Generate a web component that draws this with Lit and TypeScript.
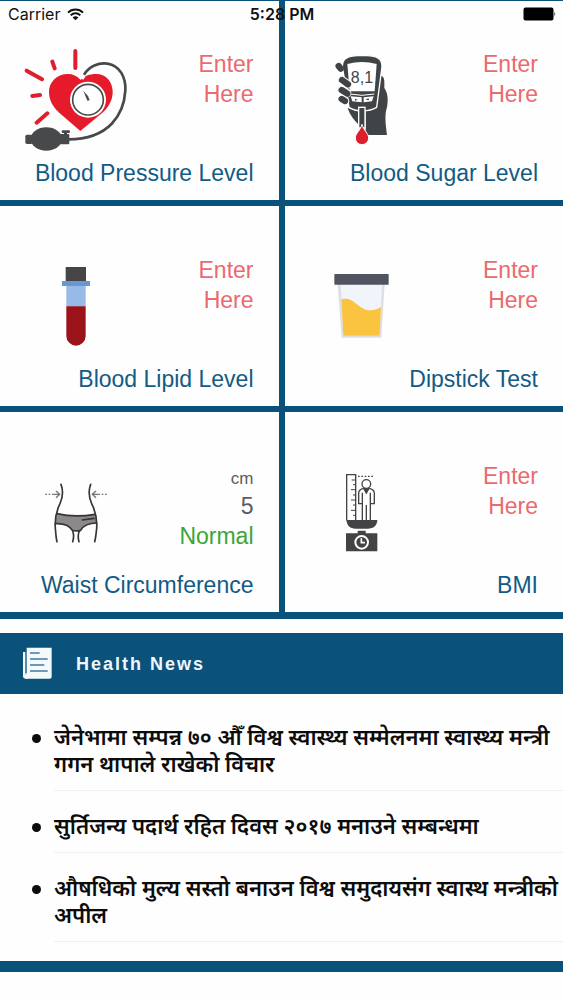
import { LitElement, html, svg, css } from "lit";
import { customElement, property } from "lit/decorators.js";

const icons = {
  pressure: svg`<svg viewBox="72 144 312 312" aria-hidden="true">
    <g stroke="#e01f2e" stroke-width="12" stroke-linecap="round">
      <path d="M226 153V204M157 185L164 205M80 212L126 238M97 288L120 285M110 368L142 340" />
    </g>
    <path fill="#e51a2b" d="M242 240C230 226 216 221 200 222C168 224 147 248 147 276C147 300 158 319 176 337L241 393L309 337C328 317 339 298 338 272C336 244 318 222 288 222C268 222 252 228 242 240Z" />
    <path fill="none" stroke="#fff" stroke-width="14" d="M244 236C262 202 292 187 322 191" />
    <path fill="none" stroke="#48494b" stroke-width="8" d="M252 224C268 199 296 187 322 191C360 197 378 232 376 272C372 340 330 418 205 418" />
    <circle cx="264" cy="299" r="54" fill="#fff" />
    <circle cx="264" cy="299" r="46" fill="#fff" stroke="#48494b" stroke-width="5" />
    <path fill="#48494b" d="M250 272L264 288L269 301L262 302Z" />
    <g fill="#48494b">
      <ellipse cx="139" cy="417" rx="47" ry="35" />
      <rect x="76" y="404" width="22" height="28" rx="5" />
      <rect x="176" y="402" width="32" height="31" rx="3" />
      <rect x="185" y="391" width="25" height="8" rx="3" />
      <rect x="192" y="396" width="9" height="12" />
    </g>
  </svg>`,
  sugar: svg`<svg viewBox="82 144 312 312" aria-hidden="true">
    <path fill="#414446" d="M284 245C284 222 308 222 308 244V264C319 280 320 300 316 322C308 346 312 374 316 405H252V326H266L284 318ZM198 324L231 330V374C216 360 204 344 198 324Z" />
    <path fill="#414446" stroke="#fff" stroke-width="4" d="M182 200C182 176 194 167 242 166C290 167 301 176 301 200L285 322C262 336 222 336 202 322Z" />
    <path fill="#fff" d="M197 192Q241 180 285 192L279 274H204Z" />
    <text x="241" y="248" text-anchor="middle" font-family="Liberation Sans" font-size="48" fill="#414446">8,1</text>
    <path fill="none" stroke="#fff" stroke-width="3" d="M204 282Q241 290 278 282" />
    <path fill="#fff" d="M207 289L240 292V307L212 304ZM246 292L276 289L271 304L246 307Z" />
    <path fill="#414446" d="M220 296l8 3-8 3zM254 296h8v4h-8z" />
    <g fill="none" stroke-linecap="round">
      <path stroke="#fff" stroke-width="26" d="M181 241L198 253M181 271L196 280M180 297L190 303" />
      <path stroke="#414446" stroke-width="19" d="M171 198L177 206M181 240L199 253M180 270L197 281M180 297L190 303" />
    </g>
    <rect x="231" y="322" width="19" height="62" fill="#414446" stroke="#fff" stroke-width="4" />
    <path fill="#dd1f2d" stroke="#fff" stroke-width="3" d="M241 373C236 392 221 400 221 414A20 20 0 0 0 261 414C261 400 246 392 241 373Z" />
  </svg>`,
  lipid: svg`<svg viewBox="72 162 312 312" aria-hidden="true">
    <rect x="197" y="201" width="61" height="42" fill="#454547" />
    <rect x="199" y="256" width="58" height="64" fill="#97bbe6" />
    <rect x="186" y="243" width="84" height="15" fill="#6898cf" />
    <path fill="#9a1319" d="M199 319H257V408A29 29 0 0 1 199 408Z" />
  </svg>`,
  dipstick: svg`<svg viewBox="82 162 312 312" aria-hidden="true">
    <path fill="#dcdfe4" d="M168 252H309L299 413H180Z" />
    <path fill="#f1f4fb" d="M177 252H301L294 407H185Z" />
    <path fill="#fbc440" d="M179 298C214 290 222 318 252 329C270 333 287 329 298 320L294 407H185Z" />
    <rect x="158" y="222" width="163" height="32" rx="2" fill="#505460" />
  </svg>`,
  waist: svg`<svg viewBox="72 165 312 312" aria-hidden="true">
    <path fill="#8b8989" d="M170 326C205 334 250 334 286 328L290 354C262 354 250 362 242 376Q229 380 217 376C208 362 195 354 166 356Z" />
    <g fill="none" stroke="#383335" stroke-width="5" stroke-linecap="round">
      <path d="M183 238C192 262 188 278 180 296C168 320 164 345 166 370C168 390 168 400 171 410" />
      <path d="M272 238C263 262 267 278 275 296C287 320 292 345 290 370C288 390 287 400 284 410" />
      <path d="M171 326C205 334 250 334 285 328M166 356C195 354 208 362 217 376Q229 380 242 376C250 362 262 354 290 354" />
      <path d="M247 345L282 340M218 378C223 390 221 400 218 410M238 378C233 390 234 400 237 410" />
    </g>
    <g fill="none" stroke="#777374" stroke-width="4">
      <path d="M136 268H160M320 268H296" stroke-dasharray="5 5" />
      <path d="M160 268H178M168 258L179 268L168 278M296 268H278M288 258L277 268L288 278" />
    </g>
  </svg>`,
  bmi: svg`<svg viewBox="82 165 312 312" aria-hidden="true">
    <g fill="none" stroke="#434244" stroke-width="4">
      <path d="M195 346V209H222V346" />
      <path d="M210 225H222M214 239H222M208 254H222M214 270H222M208 285H222M214 300H222M208 316H222M214 331H222" stroke-width="3" />
      <path d="M229 214H276" stroke-dasharray="5 5" />
      <circle cx="254" cy="237" r="13" />
      <path d="M242 346V263M266 346V263M254 346V300M242 296H231V264Q232 253 246 250L254 264L262 250Q277 253 278 264V296H267" />
    </g>
    <path fill="#434244" d="M246 249H262L254 268ZM194 345H287C286 362 276 371 258 371H222C205 371 196 362 194 345ZM193 385H228V377H252V385H287V439H193Z" />
    <circle cx="240" cy="412" r="19" fill="none" stroke="#fff" stroke-width="6" />
    <path fill="none" stroke="#fff" stroke-width="5" d="M239 400V413H250" />
  </svg>`,
};

interface Metric {
  icon: keyof typeof icons;
  label: string;
  unit?: string;
  value?: string;
  status?: string;
}

const metrics: Metric[] = [
  { icon: "pressure", label: "Blood Pressure Level" },
  { icon: "sugar", label: "Blood Sugar Level" },
  { icon: "lipid", label: "Blood Lipid Level" },
  { icon: "dipstick", label: "Dipstick Test" },
  { icon: "waist", label: "Waist Circumference", unit: "cm", value: "5", status: "Normal" },
  { icon: "bmi", label: "BMI" },
];

const news = [
  "जेनेभामा सम्पन्न ७० औँ विश्व स्वास्थ्य सम्मेलनमा स्वास्थ्य मन्त्री गगन थापाले राखेको विचार",
  "सुर्तिजन्य पदार्थ रहित दिवस २०१७ मनाउने सम्बन्धमा",
  "औषधिको मुल्य सस्तो बनाउन विश्व समुदायसंग स्वास्थ मन्त्रीको अपील",
];

@customElement("status-bar")
export class StatusBar extends LitElement {
  static styles = css`
    :host {
      display: grid;
      grid-template-columns: 1fr auto 1fr;
      align-items: center;
      height: 27px;
      box-sizing: border-box;
      padding: 0 7px 0 8px;
      border-top: 1px solid #0b527b;
      font: 16px/20px Inter, "Liberation Sans", sans-serif;
      color: #111;
    }
    .carrier {
      display: flex;
      align-items: center;
      gap: 7px;
    }
    .wifi {
      width: 17px;
      height: 13px;
    }
    .time {
      font-weight: 600;
    }
    .battery {
      justify-self: end;
      width: 33px;
      height: 14px;
    }
  `;

  render() {
    return html`
      <span class="carrier">
        Carrier
        <svg class="wifi" viewBox="0 0 17 13" aria-hidden="true">
          <g fill="none" stroke="#111" stroke-width="2">
            <path d="M1 4.6C5 0.4 12 0.4 16 4.6" />
            <path d="M3.7 7.4C6.4 4.6 10.6 4.6 13.3 7.4" />
          </g>
          <path fill="#111" d="M5.6 9.4C7.2 7.8 9.8 7.8 11.4 9.4L8.5 12.3Z" />
        </svg>
      </span>
      <span class="time">5:28 PM</span>
      <svg class="battery" viewBox="0 0 33 14" aria-hidden="true">
        <rect x="0.5" y="0.5" width="30" height="13" rx="2" />
        <path d="M31.5 4.5q1.5 2.500 0 5z" />
      </svg>
    `;
  }
}

@customElement("metric-card")
export class MetricCard extends LitElement {
  @property({ attribute: false }) metric!: Metric;

  static styles = css`
    :host {
      display: block;
    }
    .card {
      display: block;
      width: 100%;
      height: 200px;
      box-sizing: border-box;
      margin: 0;
      padding: 48px 25px 12px 24px;
      border: 0;
      background: #fefefe;
      font: 23px/30px "Liberation Sans", Arial, sans-serif;
      color: #125b84;
      text-align: right;
      cursor: pointer;
    }
    .top {
      display: flex;
      justify-content: space-between;
      height: 104px;
    }
    .top svg {
      width: 104px;
      height: 104px;
      flex: none;
    }
    .reading {
      display: flex;
      flex-direction: column;
      padding-top: 1px;
      color: #5d5d5f;
    }
    .prompt {
      width: min-content;
      color: #ea6a6d;
    }
    .unit {
      padding-top: 6px;
      font-size: 17px;
      line-height: 24px;
    }
    .status {
      color: #3ba53b;
    }
    .label {
      display: block;
      margin-top: 6px;
      white-space: nowrap;
    }
  `;

  render() {
    const { icon, label, unit, value, status } = this.metric;
    return html`
      <button class="card" type="button">
        <span class="top">
          ${icons[icon]}
          <span class="reading">
            ${value
              ? html`<span class="unit">${unit}</span><span>${value}</span><span class="status">${status}</span>`
              : html`<span class="prompt">Enter Here</span>`}
          </span>
        </span>
        <span class="label">${label}</span>
      </button>
    `;
  }
}

@customElement("health-news")
export class HealthNews extends LitElement {
  static styles = css`
    :host {
      display: block;
      border-bottom: 11px solid #0b527b;
      background: #fefefe;
    }
    .head {
      display: flex;
      align-items: center;
      gap: 24px;
      height: 61px;
      padding-left: 22px;
      background: #0b527b;
      color: #eef7fb;
    }
    .head svg {
      width: 30px;
      height: 33px;
    }
    .title {
      margin: 0;
      font: bold 18px/24px "Liberation Sans", Arial, sans-serif;
      letter-spacing: 2px;
    }
    .list {
      margin: 0;
      padding: 8px 0 19px 32px;
      list-style: none;
    }
    .item {
      display: flex;
      gap: 13px;
    }
    .item::before {
      content: "";
      flex: none;
      width: 9px;
      height: 9px;
      margin-top: 32px;
      border-radius: 50%;
      background: #0c0c0c;
    }
    .link {
      flex: 1;
      padding: 24px 0 10px;
      border-bottom: 1px solid #f0f0f0;
      font: 600 22px/27px "Noto Sans Devanagari", "Noto Sans", sans-serif;
      color: #0c0c0c;
      text-decoration: none;
    }
  `;

  render() {
    return html`
      <header class="head">
        <svg viewBox="66 111 90 99" aria-hidden="true">
          <path fill="#f4fafc" d="M69 126H76V195H80V113H155V201Q155 206 149 206H76Q69 206 69 199Z" />
          <path fill="#f4fafc" d="M76 190H84V206H76Z" />
          <path stroke="#44789a" stroke-width="4" d="M90 129H119M90 147H143M90 165H133M90 183H143" />
        </svg>
        <h2 class="title">Health News</h2>
      </header>
      <ul class="list">
        ${news.map((text) => html`<li class="item"><a class="link" href="#" lang="ne">${text}</a></li>`)}
      </ul>
    `;
  }
}

@customElement("app-root")
export class AppRoot extends LitElement {
  static styles = css`
    :host {
      display: block;
      position: relative;
      min-height: 100vh;
      background: #fefefe;
    }
    .status {
      position: absolute;
      top: 0;
      left: 0;
      right: 0;
    }
    .grid {
      display: grid;
      grid-template-columns: 1fr 1fr;
      gap: 6px;
      padding-bottom: 7px;
      margin-bottom: 14px;
      background: #0b527b;
    }
  `;

  render() {
    return html`
      <main>
        <section class="grid">
          ${metrics.map((m) => html`<metric-card .metric=${m}></metric-card>`)}
        </section>
        <health-news></health-news>
      </main>
      <status-bar class="status"></status-bar>
    `;
  }
}
